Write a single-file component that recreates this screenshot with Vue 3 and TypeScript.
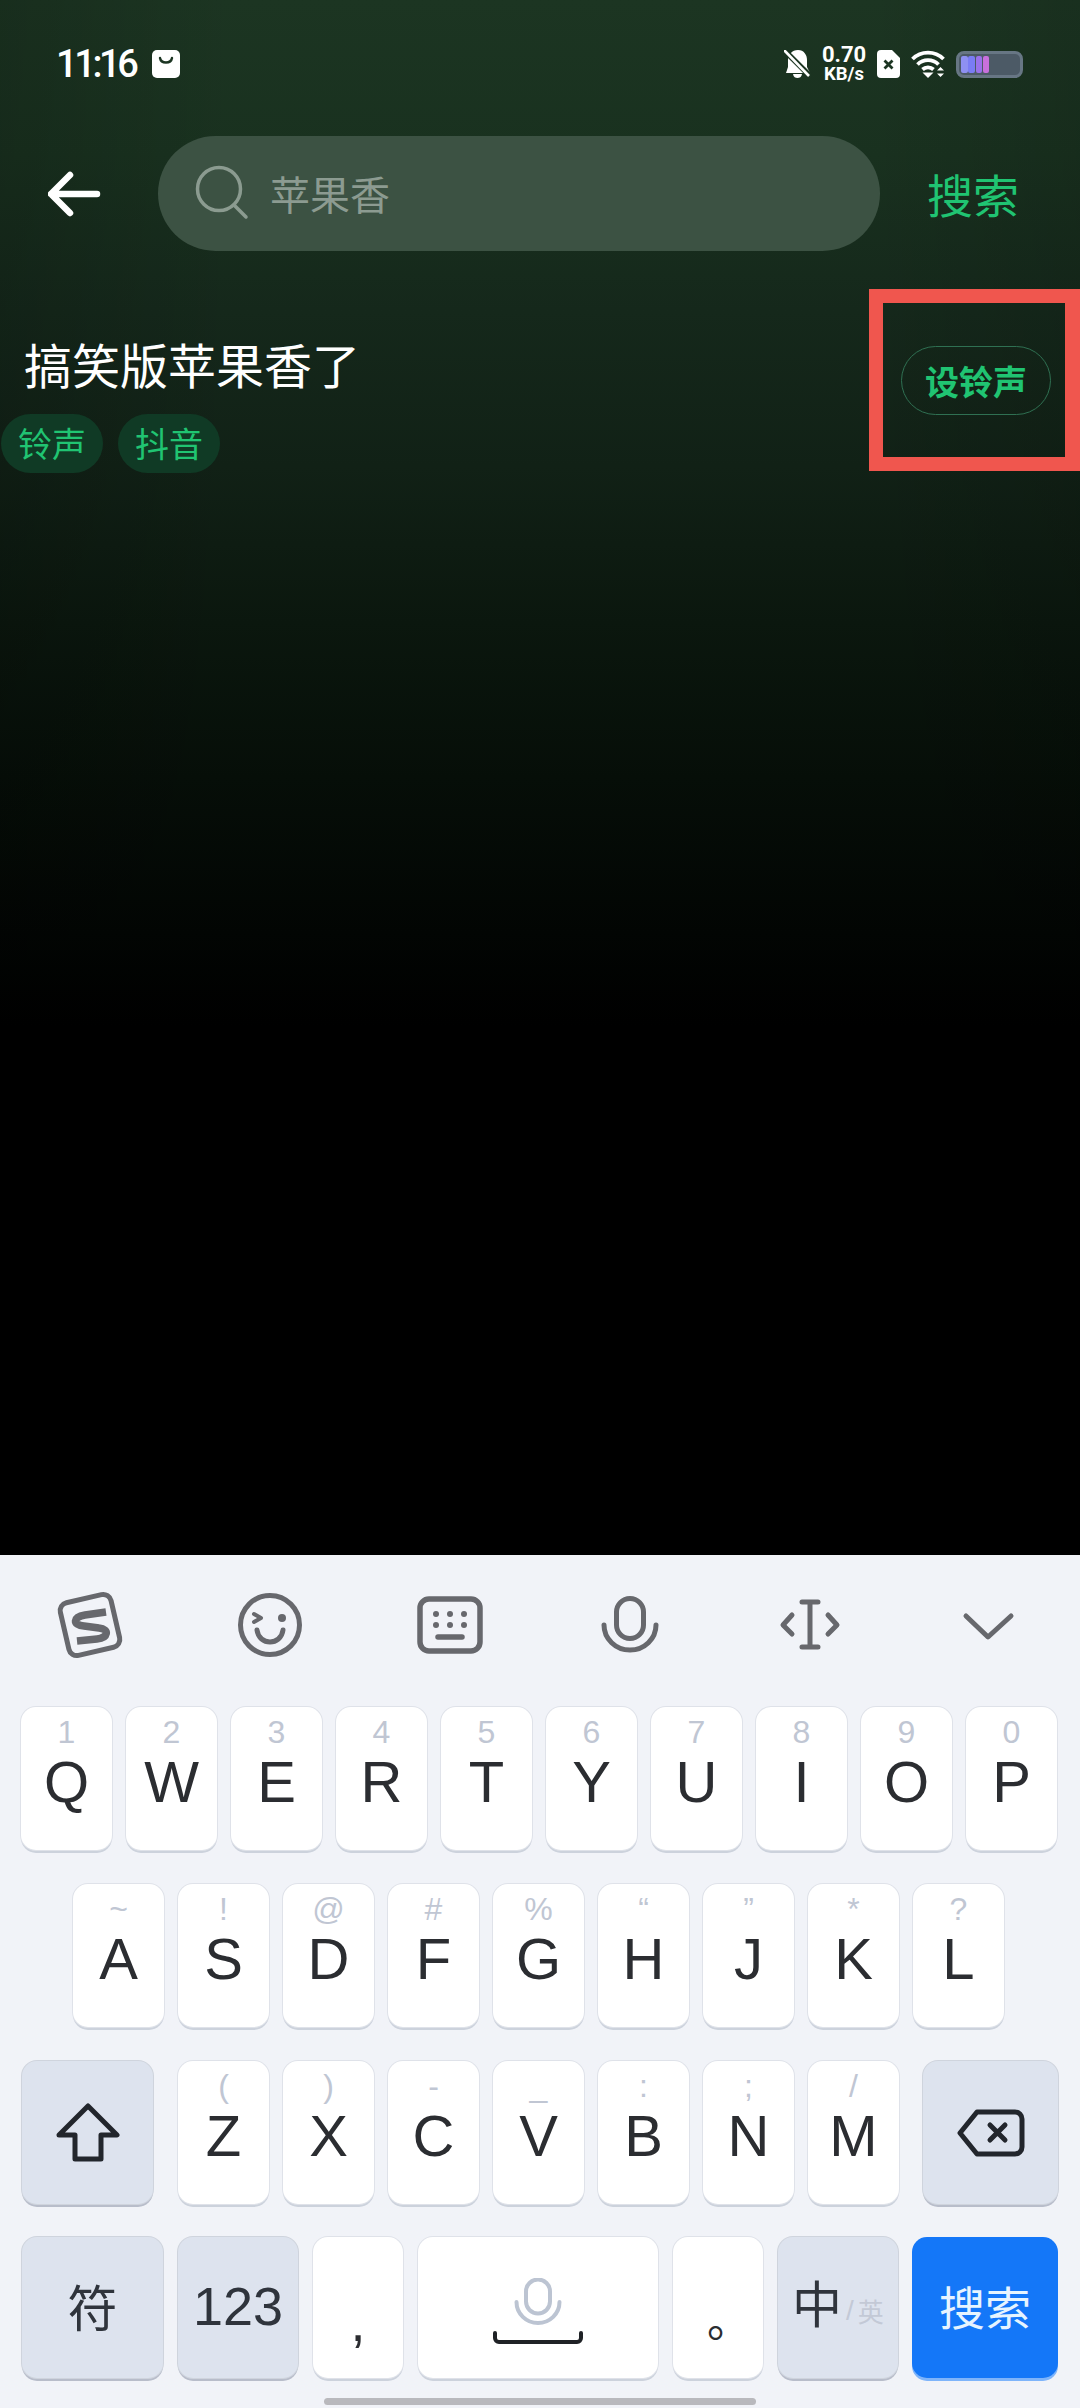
<script setup lang="ts">
const row1 = [
  { hint: '1', label: 'Q' }, { hint: '2', label: 'W' }, { hint: '3', label: 'E' }, { hint: '4', label: 'R' },
  { hint: '5', label: 'T' }, { hint: '6', label: 'Y' }, { hint: '7', label: 'U' }, { hint: '8', label: 'I' },
  { hint: '9', label: 'O' }, { hint: '0', label: 'P' },
]
const row2 = [
  { hint: '~', label: 'A' }, { hint: '!', label: 'S' }, { hint: '@', label: 'D' }, { hint: '#', label: 'F' },
  { hint: '%', label: 'G' }, { hint: '“', label: 'H' }, { hint: '”', label: 'J' }, { hint: '*', label: 'K' },
  { hint: '?', label: 'L' },
]
const row3 = [
  { hint: '(', label: 'Z' }, { hint: ')', label: 'X' }, { hint: '-', label: 'C' }, { hint: '_', label: 'V' },
  { hint: ':', label: 'B' }, { hint: ';', label: 'N' }, { hint: '/', label: 'M' },
]
const batterySegments = ['#8e90f2', '#7a7cf4', '#9a72ea', '#c870dc']
</script>

<template>
  <div class="screen">
    <main class="top">
      <header class="status">
        <div class="status-left">
          <span class="time">11:16</span>
          <svg class="bag" width="28" height="28" viewBox="0 0 28 28">
            <rect width="28" height="28" rx="5" fill="#fff" />
            <path d="M8 8 C9 14 19 14 20 8" fill="none" stroke="#1c3522" stroke-width="2.4" stroke-linecap="round" />
          </svg>
        </div>
        <div class="status-right">
          <svg width="27" height="28" viewBox="0 0 27 28">
            <path d="M14 0 C20 0 23 5 23 10 V17 L26 23 H2 L4 17 V10 C4 5 8 0 14 0 Z M9 24 H18 C17.500 27 15.500 28 13.500 28 C11.500 28 9.500 27 9 24 Z" fill="#fff" />
            <path d="M1 1 L27 27" stroke="#1c3522" stroke-width="5.500" />
            <path d="M0 0 L25 26" stroke="#fff" stroke-width="2.600" />
          </svg>
          <div class="speed">
            <span class="speed-num">0.70</span>
            <span class="speed-unit">KB/s</span>
          </div>
          <svg width="23" height="28" viewBox="0 0 23 28">
            <path d="M4 0 H15 L23 8 V24 A4 4 0 0 1 19 28 H4 A4 4 0 0 1 0 24 V4 A4 4 0 0 1 4 0 Z" fill="#fff" />
            <path d="M7.500 10.500 L15.500 18.500 M15.500 10.500 L7.500 18.500" stroke="#1c3522" stroke-width="2.800" />
          </svg>
          <svg width="34" height="28" viewBox="0 0 34 28">
            <path d="M1.500 9 A22 22 0 0 1 32.500 9 M6.500 14.500 A15 15 0 0 1 27.500 14.500 M11.500 19.500 A8 8 0 0 1 22.500 19.500" fill="none" stroke="#fff" stroke-width="3.800" />
            <path d="M11.500 22.500 L17 28 L22.500 22.500 Z" fill="#fff" />
            <path d="M26 20.500 L29.500 17 L33 20.500 Z M26 23.500 L29.500 27 L33 23.500 Z" fill="#fff" />
          </svg>
          <div class="battery">
            <span v-for="c in batterySegments" :key="c" class="battery-seg" :style="{ background: c }"></span>
          </div>
        </div>
      </header>

      <section class="search-row">
        <svg class="back" width="110" height="46" viewBox="0 0 110 46">
          <path d="M3 23 H49 M22 4 L3 23 L22 42" fill="none" stroke="#fff" stroke-width="6.500" stroke-linecap="round" stroke-linejoin="round" />
        </svg>
        <div class="search-pill">
          <svg width="58" height="58" viewBox="0 0 58 58">
            <circle cx="24" cy="24" r="21.500" fill="none" stroke="#8b9b90" stroke-width="3.500" />
            <path d="M39 40 L51 52" stroke="#8b9b90" stroke-width="3.500" stroke-linecap="round" />
          </svg>
          <span class="placeholder">苹果香</span>
        </div>
        <span class="search-action">搜索</span>
      </section>

      <section class="result">
        <div class="result-info">
          <div class="result-title">搞笑版苹果香了</div>
          <div class="tags">
            <span class="tag">铃声</span>
            <span class="tag">抖音</span>
          </div>
        </div>
        <div class="highlight">
          <button class="ring-btn">设铃声</button>
        </div>
      </section>
    </main>

    <section class="keyboard">
      <div class="toolbar">
        <svg class="tool" viewBox="-40 -40 80 80">
          <rect x="-26" y="-27" width="52" height="54" rx="8" transform="rotate(-13)" />
          <path d="M16 -13 L-5 -10 C-17 -8 -18 0 -6 1 L9 3 C20 4 18 13 7 14 L-13 16" stroke-width="7.500" stroke-linecap="butt" />
        </svg>
        <svg class="tool" viewBox="-40 -40 80 80">
          <circle r="29.500" />
          <path d="M-16 -11 L-9 -7 L-16 -3" stroke-width="4" />
          <circle cx="12" cy="-7" r="4" class="solid" />
          <path d="M-13 5 C-11 21 11 21 13 5" />
        </svg>
        <svg class="tool" viewBox="-40 -40 80 80">
          <rect x="-30" y="-26" width="60" height="52" rx="9" stroke-width="5.500" />
          <g class="solid">
            <circle cx="-14" cy="-11" r="3" /><circle cy="-11" r="3" /><circle cx="14" cy="-11" r="3" />
            <circle cx="-14" r="3" /><circle r="3" /><circle cx="14" r="3" />
          </g>
          <path d="M-12 12 H12" stroke-width="5.500" />
        </svg>
        <svg class="tool" viewBox="-40 -40 80 80">
          <rect x="-13.500" y="-26.500" width="27" height="40" rx="13.500" />
          <path d="M-26 0 A26 25 0 0 0 26 0" />
        </svg>
        <svg class="tool" viewBox="-40 -40 80 80">
          <path d="M-8 -23 H8 M0 -23 V22 M-8 22 H8" />
          <path d="M-18 -10 L-27 0 L-18 9 M18 -10 L27 0 L18 9" />
        </svg>
        <svg class="tool" viewBox="-40 -40 80 80">
          <path d="M-24 -9 L-2 12 L21 -9" />
        </svg>
      </div>

      <div class="rows">
        <div class="row">
          <div v-for="k in row1" :key="k.label" class="key">
            <span class="hint">{{ k.hint }}</span>
            <span class="letter">{{ k.label }}</span>
          </div>
        </div>
        <div class="row row-center">
          <div v-for="k in row2" :key="k.label" class="key">
            <span class="hint">{{ k.hint }}</span>
            <span class="letter">{{ k.label }}</span>
          </div>
        </div>
        <div class="row row-third">
          <div class="key special shift">
            <svg width="64" height="60" viewBox="0 0 64 60">
              <path d="M32 3 L61 32 H45 V56 H19 V32 H3 Z" fill="none" stroke="#22262c" stroke-width="5" stroke-linejoin="round" />
            </svg>
          </div>
          <div v-for="k in row3" :key="k.label" class="key">
            <span class="hint">{{ k.hint }}</span>
            <span class="letter">{{ k.label }}</span>
          </div>
          <div class="key special del">
            <svg width="68" height="48" viewBox="0 0 68 48">
              <path d="M20 3 H58 A7 7 0 0 1 65 10 V38 A7 7 0 0 1 58 45 H20 L3 24 Z" fill="none" stroke="#22262c" stroke-width="5" stroke-linejoin="round" />
              <path d="M33 16 L48 31 M48 16 L33 31" stroke="#22262c" stroke-width="5" stroke-linecap="round" />
            </svg>
          </div>
        </div>
        <div class="row row-bottom">
          <div class="key special fn w141"><span class="cjk">符</span></div>
          <div class="key special fn w120"><span class="num">123</span></div>
          <div class="key fn punct"><span class="comma">,</span></div>
          <div class="key fn space">
            <svg width="90" height="68" viewBox="0 0 90 68">
              <rect x="33" y="1.500" width="24" height="34" rx="12" fill="none" stroke="#bcc4d2" stroke-width="4" />
              <path d="M23.500 24 A21.500 21 0 0 0 66.500 24" fill="none" stroke="#bcc4d2" stroke-width="4" stroke-linecap="round" />
              <path d="M2 55 V60 A4 4 0 0 0 6 64 H84 A4 4 0 0 0 88 60 V55" fill="none" stroke="#1f2226" stroke-width="4" stroke-linecap="round" />
            </svg>
          </div>
          <div class="key fn punct"><span class="period">。</span></div>
          <div class="key special fn w120 lang">
            <span class="zh">中</span><span class="sl">/</span><span class="en">英</span>
          </div>
          <div class="key fn enter">搜索</div>
        </div>
      </div>
      <div class="home-bar"></div>
    </section>
  </div>
</template>

<style>
html, body { margin: 0; padding: 0; background: #000; }
</style>

<style scoped>
.screen {
  width: 1080px;
  height: 2408px;
  display: flex;
  flex-direction: column;
  font-family: "Noto Sans CJK SC", "Noto Sans", sans-serif;
  overflow: hidden;
}
.top {
  height: 1555px;
  flex: none;
  background:
    linear-gradient(90deg, rgba(0, 0, 0, 0.14), rgba(0, 0, 0, 0) 22%, rgba(0, 0, 0, 0) 80%, rgba(0, 0, 0, 0.1)),
    linear-gradient(180deg, #1c3522 0%, #19311f 10%, #15281b 20%, #112116 30%, #0b170e 40%, #060e08 50%, #020503 60%, #000 66%, #000 100%);
}
.status {
  height: 128px;
  padding: 0 57px 0 56px;
  display: flex;
  align-items: center;
  justify-content: space-between;
}
.status-left { display: flex; align-items: center; gap: 17px; }
.time {
  font-family: Roboto, sans-serif;
  font-size: 38px;
  font-weight: 500;
  letter-spacing: -3.400px;
  color: #fff;
  line-height: 1;
}
.bag { display: block; }
.status-right { display: flex; align-items: center; gap: 11px; }
.speed {
  display: flex;
  flex-direction: column;
  align-items: center;
  font-family: Roboto, sans-serif;
  color: #fff;
  font-weight: 700;
  width: 44px;
}
.speed-num { font-size: 22px; line-height: 21px; }
.speed-unit { font-size: 18.500px; line-height: 19px; }
.battery {
  width: 67px;
  height: 27px;
  box-sizing: border-box;
  border: 3px solid #677684;
  border-radius: 8px;
  background: #4c5a66;
  padding: 2px;
  display: flex;
  gap: 0.800px;
}
.battery-seg {
  width: 6.500px;
  height: 100%;
  border-radius: 2px;
}
.search-row {
  height: 115px;
  margin-top: 8px;
  padding-left: 48px;
  display: flex;
  align-items: center;
}
.back { flex: none; }
.search-pill {
  width: 722px;
  height: 115px;
  border-radius: 58px;
  background: #3c5243;
  display: flex;
  align-items: center;
  box-sizing: border-box;
  padding-left: 37px;
}
.placeholder {
  margin-left: 17px;
  font-size: 40px;
  line-height: 1;
  color: #8c9b91;
  margin-top: -2px;
}
.search-action {
  margin-left: 47px;
  font-size: 46px;
  font-weight: 400;
  line-height: 1;
  color: #20c472;
  margin-top: -2px;
}
.result {
  margin-top: 38px;
  display: flex;
  justify-content: space-between;
  align-items: flex-start;
}
.result-info { display: flex; flex-direction: column; }
.result-title {
  margin-top: 48px;
  margin-left: 24px;
  font-size: 48px;
  line-height: 52px;
  color: #fff;
}
.tags {
  margin-top: 25px;
  display: flex;
  gap: 15px;
  padding-left: 1px;
}
.tag {
  width: 102px;
  height: 59px;
  border-radius: 30px;
  background: #103a25;
  color: #20c472;
  font-size: 34px;
  font-weight: 400;
  line-height: 57px;
  text-align: center;
}
.highlight {
  box-sizing: border-box;
  width: 211px;
  height: 182px;
  border: 14px solid #f0564e;
  border-right-width: 15px;
  display: flex;
  align-items: flex-start;
  padding-left: 18px;
  padding-top: 43px;
}
.ring-btn {
  width: 150px;
  height: 69px;
  box-sizing: border-box;
  border: 1.500px solid #2f7052;
  border-radius: 35px;
  background: transparent;
  color: #20c472;
  font-family: inherit;
  font-size: 34px;
  font-weight: 700;
  padding: 0;
  line-height: 1;
}
.keyboard {
  position: relative;
  flex: 1;
  background: #f1f3f8;
}
.toolbar {
  height: 140px;
  display: grid;
  grid-template-columns: repeat(6, 180px);
  justify-items: center;
  align-items: center;
}
.tool {
  width: 80px;
  height: 80px;
  fill: none;
  stroke: #67686d;
  stroke-width: 5;
  stroke-linecap: round;
  stroke-linejoin: round;
}
.tool .solid, .tool circle.solid { fill: #67686d; stroke: none; }
.rows {
  margin-top: 12px;
  display: flex;
  flex-direction: column;
  gap: 34px;
}
.row { display: flex; gap: 14px; height: 143px; padding-left: 21px; }
.row-center { padding-left: 73px; }
.row-third { padding-left: 22px; }
.row-bottom { padding-left: 22px; height: 141px; margin-top: -1px; gap: 15px; }
.key {
  position: relative;
  flex: none;
  width: 91px;
  height: 143px;
  box-sizing: border-box;
  border-radius: 15px;
  background: #fff;
  box-shadow: 0 0 0 1px #dfe2e9, 0 3px 0 #ccd2dc;
  display: flex;
  flex-direction: column;
  align-items: center;
  padding-top: 7px;
  font-family: "Liberation Sans", sans-serif;
}
.hint {
  height: 38px;
  line-height: 36px;
  font-size: 32px;
  color: #c0c6d3;
  font-weight: 400;
}
.letter {
  font-size: 58px;
  line-height: 60px;
  color: #2b2d31;
}
.special { background: #dde3ee; box-shadow: 0 0 0 1px #cfd4dd, 0 3px 0 #b8bdca; }
.shift { width: 131px; margin-right: 11px; justify-content: center; padding-top: 0; }
.del { width: 135px; margin-left: 10px; justify-content: center; padding-top: 0; }
.fn { height: 141px; padding-top: 0; justify-content: center; flex-direction: row; align-items: center; }
.w141 { width: 141px; }
.w120 { width: 120px; }
.cjk {
  font-family: "Noto Sans CJK SC", sans-serif;
  font-size: 50px;
  line-height: 1;
  color: #2f343c;
  margin-top: -6px;
}
.num { font-size: 54px; line-height: 1; color: #2f343c; margin-top: -4px; }
.punct { width: 90px; }
.comma { font-size: 54px; line-height: 1; color: #2b2d31; margin-top: 28px; font-weight: 400; }
.period {
  font-family: "Noto Sans CJK SC", sans-serif;
  font-size: 44px;
  line-height: 1;
  color: #2b2d31;
  margin-top: 20px;
  margin-left: 22px;
}
.space { width: 240px; padding-top: 8px; }
.lang { align-items: flex-end; justify-content: flex-start; padding: 0 0 52px 14px; }
.zh {
  font-family: "Noto Sans CJK SC", sans-serif;
  font-size: 50px;
  line-height: 50px;
  color: #2f343c;
}
.sl { font-size: 28px; line-height: 30px; color: #c3c9d6; margin-left: 4px; }
.en {
  font-family: "Noto Sans CJK SC", sans-serif;
  font-size: 26px;
  line-height: 30px;
  color: #c3c9d6;
  margin-left: 4px;
}
.enter {
  width: 146px;
  margin-left: -1px;
  background: #1477f8;
  box-shadow: 0 3px 0 #7eb4fa;
  color: #e6f4ff;
  font-family: "Noto Sans CJK SC", sans-serif;
  font-size: 46px;
  line-height: 1;
  padding-bottom: 6px;
}
.home-bar {
  position: absolute;
  left: 324px;
  top: 843px;
  width: 432px;
  height: 7px;
  border-radius: 4px;
  background: #b9b9bd;
}
</style>
